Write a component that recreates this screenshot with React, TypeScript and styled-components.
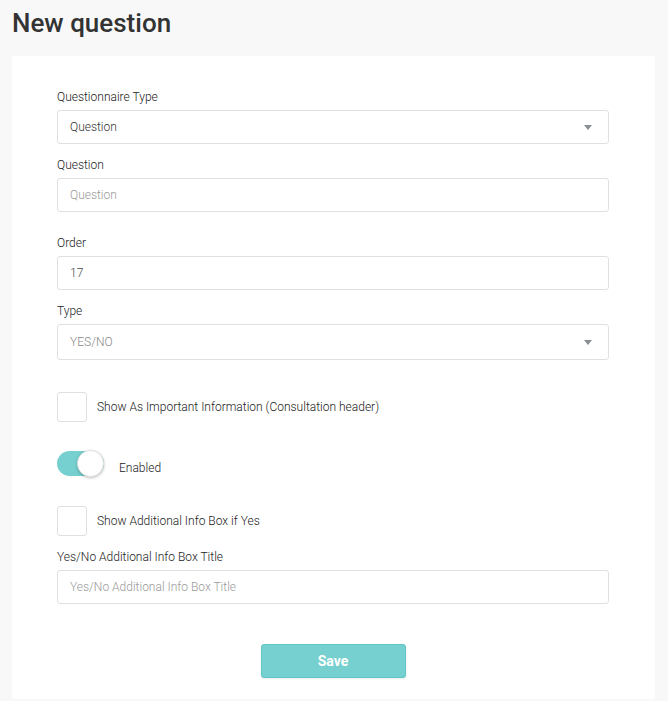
import React from "react";
import styled, { createGlobalStyle } from "styled-components";

const Global = createGlobalStyle`
  html, body { margin: 0; padding: 0; background: #f8f8f8; }
  body { font-family: Roboto, "Liberation Sans", sans-serif; color: #333; }
  * { box-sizing: border-box; }
`;

const Page = styled.div`
  padding: 0 13px 2px 12px;
  min-height: 701px;
`;

const Title = styled.h1`
  margin: 0;
  height: 56px;
  padding-top: 7px;
  font-size: 26px;
  line-height: 32px;
  font-weight: 500;
  color: #333;
`;

const Card = styled.div`
  background: #fff;
  border-radius: 3px;
  padding: 33px 46px 21px 45px;
  display: flex;
  flex-direction: column;
`;

const Group = styled.div<{ $mb: number }>`
  display: flex;
  flex-direction: column;
  margin-bottom: ${(p) => p.$mb}px;
`;

const Label = styled.label`
  font-size: 12px;
  line-height: 16px;
  font-weight: 300;
  color: #222;
  margin-bottom: 5px;
`;

const Input = styled.input<{ $h?: number }>`
  height: ${(p) => p.$h ?? 34}px;
  border: 1px solid #e0e0e0;
  border-radius: 3px;
  padding: 0 12px;
  font-family: inherit;
  font-size: 12px;
  font-weight: 300;
  color: #444;
  outline: none;
  &::placeholder { color: #999; }
`;

const SelectBox = styled.div<{ $h: number; $muted?: boolean }>`
  position: relative;
  height: ${(p) => p.$h}px;
  border: 1px solid #e0e0e0;
  border-radius: 3px;
  padding: 0 12px;
  display: flex;
  align-items: center;
  font-size: 12px;
  font-weight: 300;
  color: ${(p) => (p.$muted ? "#888" : "#333")};
`;

const Caret = styled.span`
  position: absolute;
  right: 16px;
  top: 50%;
  margin-top: -2px;
  width: 0;
  height: 0;
  border-left: 4px solid transparent;
  border-right: 4px solid transparent;
  border-top: 5px solid #888e93;
`;

const CheckRow = styled.div<{ $mb: number }>`
  display: flex;
  align-items: center;
  gap: 10px;
  margin-bottom: ${(p) => p.$mb}px;
  font-size: 12px;
  font-weight: 300;
  color: #222;
`;

const ToggleRow = styled.div<{ $mb: number }>`
  display: flex;
  align-items: flex-start;
  gap: 15px;
  margin-bottom: ${(p) => p.$mb}px;
  font-size: 12px;
  font-weight: 300;
  color: #222;
`;

const ToggleText = styled.span`
  margin-top: 10px;
  line-height: 14px;
`;

const Box = styled.span`
  width: 30px;
  height: 30px;
  border: 1px solid #e0e0e0;
  border-radius: 3px;
  background: #fff;
  flex: none;
`;

const Toggle = styled.span`
  position: relative;
  width: 47px;
  height: 25px;
  border-radius: 13px;
  background: #76d0cf;
  flex: none;
`;

const Knob = styled.span`
  position: absolute;
  right: 0;
  top: -1px;
  width: 27px;
  height: 27px;
  border-radius: 50%;
  background: #fff;
  border: 1px solid #e3e3e3;
  box-shadow: 0 1px 3px rgba(0, 0, 0, 0.25);
`;

const ButtonRow = styled.div`
  display: flex;
  justify-content: center;
  margin-top: 40px;
`;

const SaveButton = styled.button`
  width: 145px;
  height: 34px;
  border: 1px solid #5ec6c4;
  border-radius: 3px;
  background: #76d0cf;
  color: #fff;
  font-family: inherit;
  font-size: 14px;
  font-weight: 700;
  box-shadow: 0 1px 2px rgba(0, 0, 0, 0.08);
`;

export default function App() {
  return (
    <>
      <Global />
      <Page>
        <Title>New question</Title>
        <Card>
          <Group $mb={13}>
            <Label>Questionnaire Type</Label>
            <SelectBox $h={34}>
              Question
              <Caret />
            </SelectBox>
          </Group>
          <Group $mb={23}>
            <Label>Question</Label>
            <Input placeholder="Question" />
          </Group>
          <Group $mb={13}>
            <Label>Order</Label>
            <Input defaultValue="17" />
          </Group>
          <Group $mb={32}>
            <Label>Type</Label>
            <SelectBox $h={36} $muted>
              YES/NO
              <Caret />
            </SelectBox>
          </Group>
          <CheckRow $mb={29}>
            <Box />
            Show As Important Information (Consultation header)
          </CheckRow>
          <ToggleRow $mb={30}>
            <Toggle>
              <Knob />
            </Toggle>
            <ToggleText>Enabled</ToggleText>
          </ToggleRow>
          <CheckRow $mb={13}>
            <Box />
            Show Additional Info Box if Yes
          </CheckRow>
          <Group $mb={0}>
            <Label>Yes/No Additional Info Box Title</Label>
            <Input placeholder="Yes/No Additional Info Box Title" />
          </Group>
          <ButtonRow>
            <SaveButton>Save</SaveButton>
          </ButtonRow>
        </Card>
      </Page>
    </>
  );
}
